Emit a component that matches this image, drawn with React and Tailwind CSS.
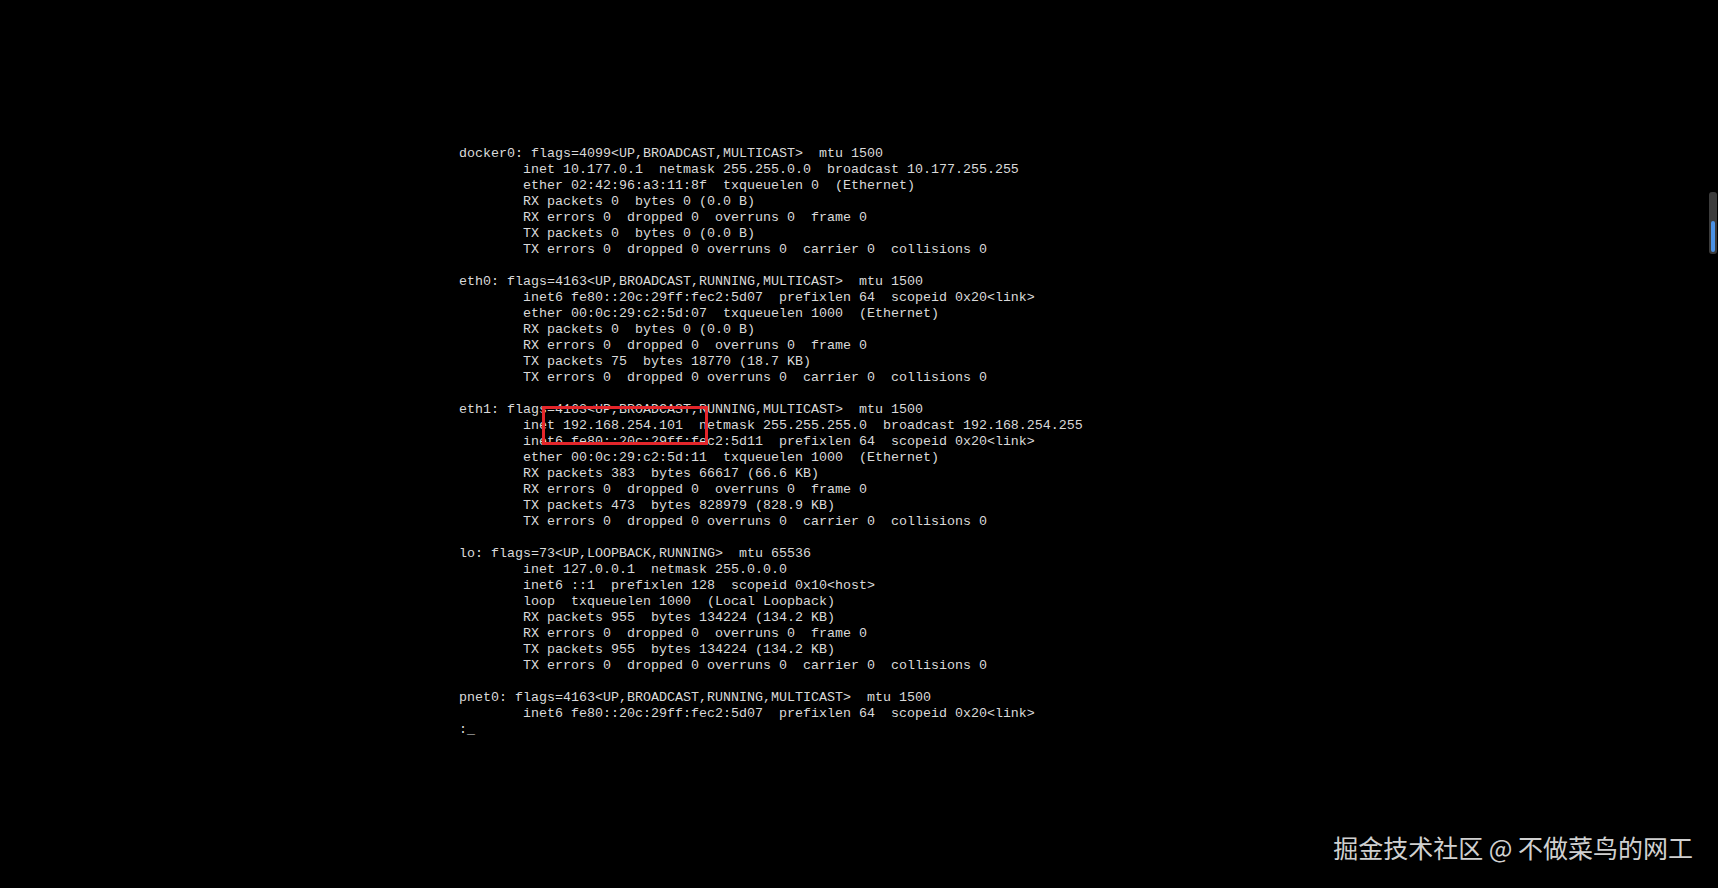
import React from 'react';

const lines = [
  'docker0: flags=4099<UP,BROADCAST,MULTICAST>  mtu 1500',
  '        inet 10.177.0.1  netmask 255.255.0.0  broadcast 10.177.255.255',
  '        ether 02:42:96:a3:11:8f  txqueuelen 0  (Ethernet)',
  '        RX packets 0  bytes 0 (0.0 B)',
  '        RX errors 0  dropped 0  overruns 0  frame 0',
  '        TX packets 0  bytes 0 (0.0 B)',
  '        TX errors 0  dropped 0 overruns 0  carrier 0  collisions 0',
  '',
  'eth0: flags=4163<UP,BROADCAST,RUNNING,MULTICAST>  mtu 1500',
  '        inet6 fe80::20c:29ff:fec2:5d07  prefixlen 64  scopeid 0x20<link>',
  '        ether 00:0c:29:c2:5d:07  txqueuelen 1000  (Ethernet)',
  '        RX packets 0  bytes 0 (0.0 B)',
  '        RX errors 0  dropped 0  overruns 0  frame 0',
  '        TX packets 75  bytes 18770 (18.7 KB)',
  '        TX errors 0  dropped 0 overruns 0  carrier 0  collisions 0',
  '',
  'eth1: flags=4163<UP,BROADCAST,RUNNING,MULTICAST>  mtu 1500',
  '        inet 192.168.254.101  netmask 255.255.255.0  broadcast 192.168.254.255',
  '        inet6 fe80::20c:29ff:fec2:5d11  prefixlen 64  scopeid 0x20<link>',
  '        ether 00:0c:29:c2:5d:11  txqueuelen 1000  (Ethernet)',
  '        RX packets 383  bytes 66617 (66.6 KB)',
  '        RX errors 0  dropped 0  overruns 0  frame 0',
  '        TX packets 473  bytes 828979 (828.9 KB)',
  '        TX errors 0  dropped 0 overruns 0  carrier 0  collisions 0',
  '',
  'lo: flags=73<UP,LOOPBACK,RUNNING>  mtu 65536',
  '        inet 127.0.0.1  netmask 255.0.0.0',
  '        inet6 ::1  prefixlen 128  scopeid 0x10<host>',
  '        loop  txqueuelen 1000  (Local Loopback)',
  '        RX packets 955  bytes 134224 (134.2 KB)',
  '        RX errors 0  dropped 0  overruns 0  frame 0',
  '        TX packets 955  bytes 134224 (134.2 KB)',
  '        TX errors 0  dropped 0 overruns 0  carrier 0  collisions 0',
  '',
  'pnet0: flags=4163<UP,BROADCAST,RUNNING,MULTICAST>  mtu 1500',
  '        inet6 fe80::20c:29ff:fec2:5d07  prefixlen 64  scopeid 0x20<link>',
  ':_',
];

export default function App() {
  return (
    <div className="relative w-full h-[888px] bg-black overflow-hidden">
      {/* console output */}
      <div
        className="pl-[459px] pt-[146px] text-[#dadada] text-[13.333px] leading-[16px] whitespace-pre"
        style={{ fontFamily: '"Liberation Mono", "DejaVu Sans Mono", monospace' }}
      >
        {lines.map((l, i) => (
          <div key={i} className="h-[16px]">{l}</div>
        ))}
      </div>

      {/* red highlight box */}
      <div className="absolute left-[542px] top-[406px] w-[166px] h-[39px] border-[3px] border-[#e3262b]"></div>

      {/* scrollbar */}
      <div className="absolute left-[1709px] top-[192px] w-[8px] h-[62px] rounded-[3px] bg-[#3c3c3c] flex flex-col justify-end p-[2px]">
        <div className="h-[31px] w-full rounded-[2px] bg-[#4b92e6]"></div>
      </div>

      {/* watermark */}
      <div
        className="absolute right-[25px] top-[832px] text-[25px] leading-[30px] text-[#d0d0d0]"
        style={{ fontFamily: '"Noto Sans CJK SC", "Noto Sans", sans-serif' }}
      >
        掘金技术社区 @ 不做菜鸟的网工
      </div>
    </div>
  );
}
